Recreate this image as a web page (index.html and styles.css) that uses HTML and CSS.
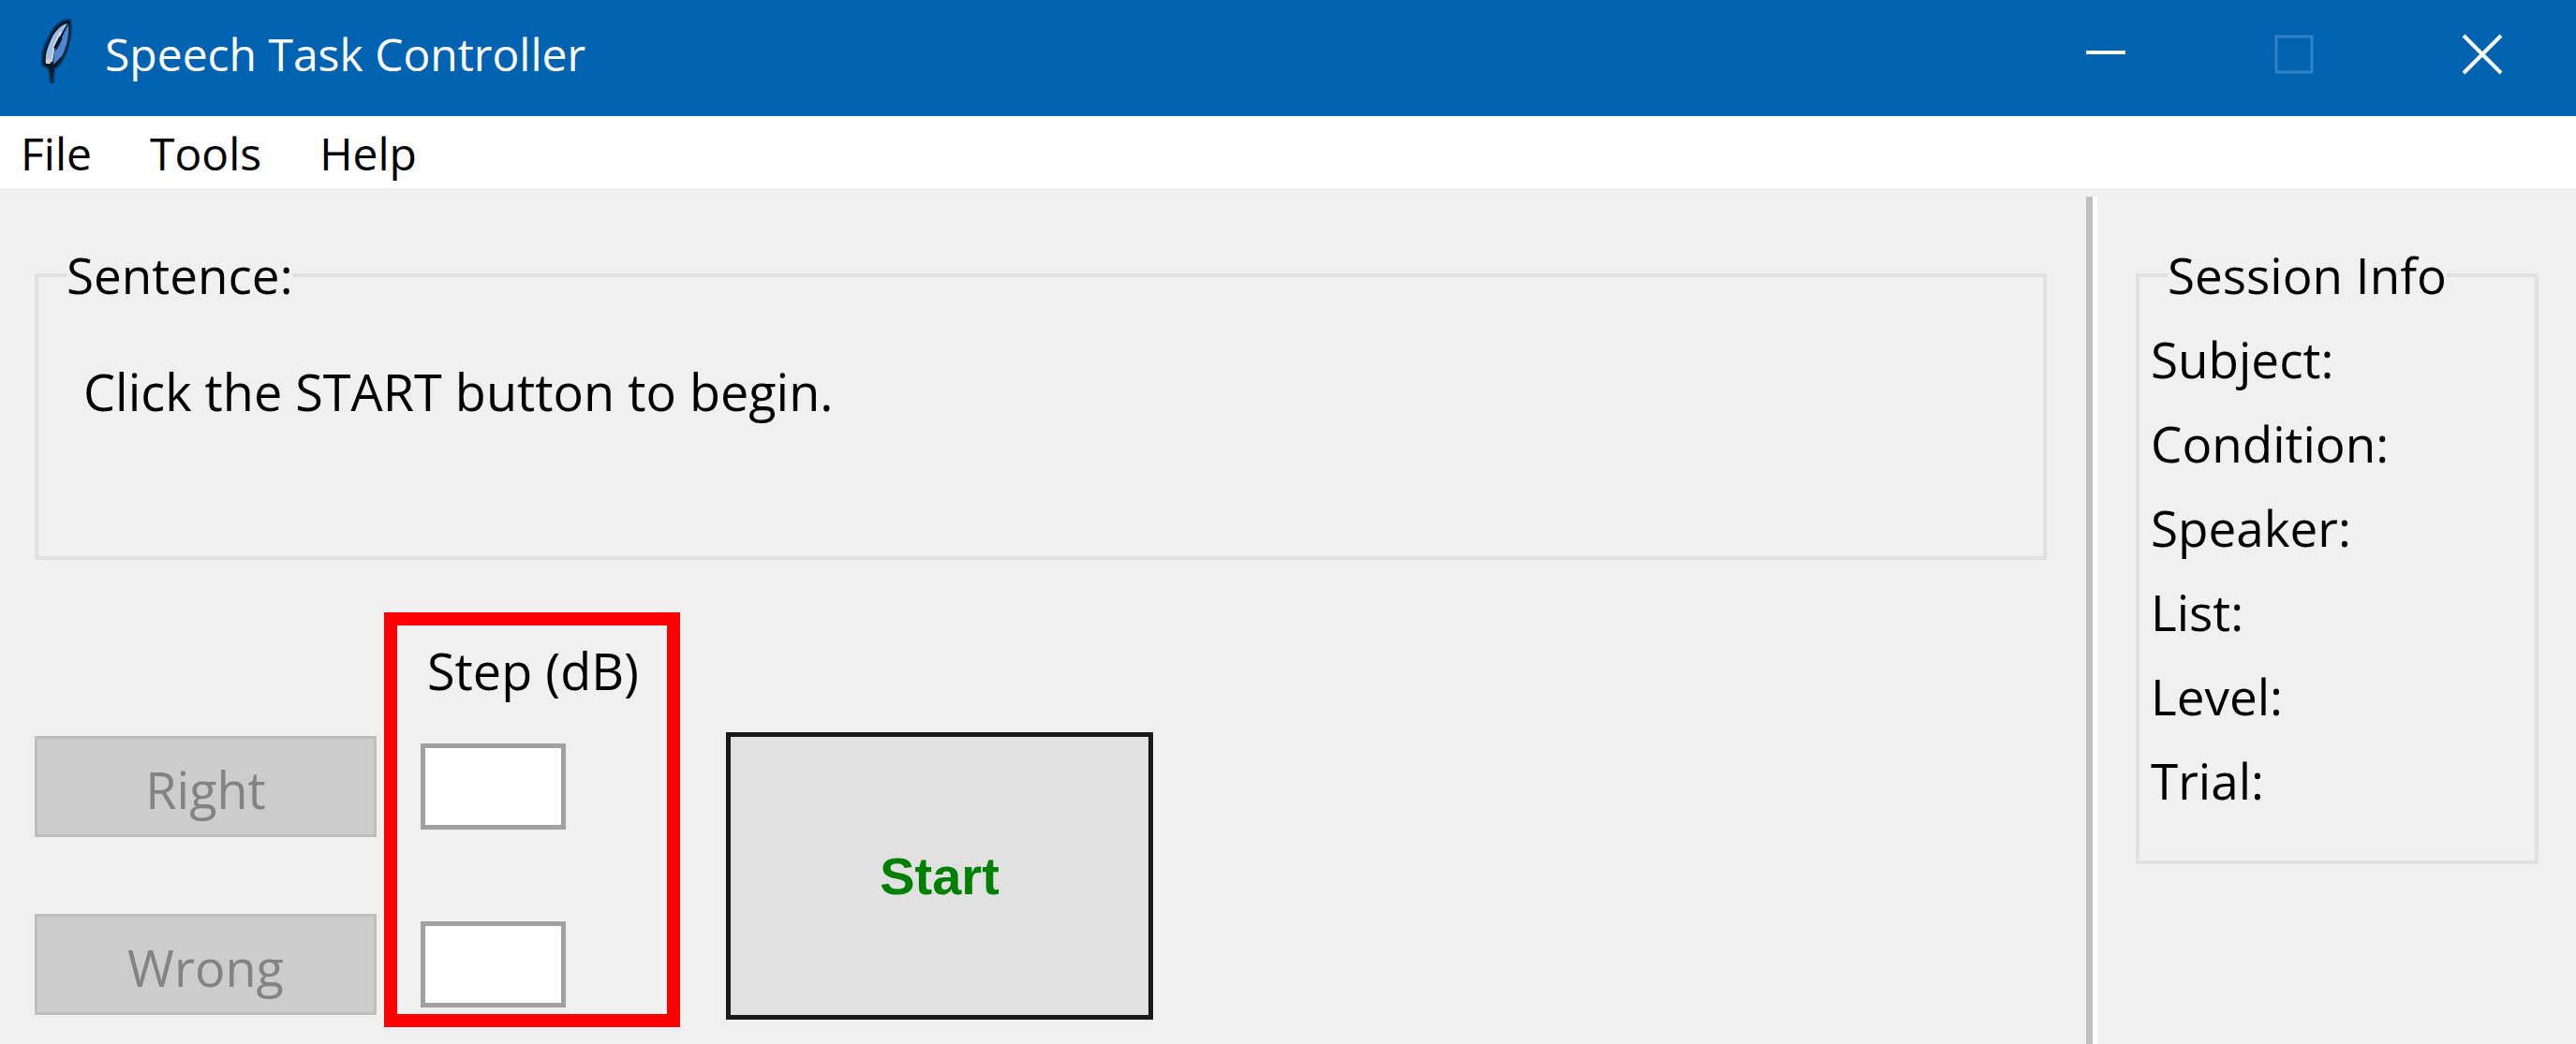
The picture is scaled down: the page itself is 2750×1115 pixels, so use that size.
FILE: index.html
```html
<!DOCTYPE html>
<html lang="en">
<head>
<meta charset="utf-8">
<title>Speech Task Controller</title>
<link rel="stylesheet" href="styles.css">
</head>
<body>
<header class="titlebar">
  <svg class="feather" viewBox="0 0 36 72" aria-hidden="true">
    <path d="M33 3C25 2 16 9 11 20C7 27 3 35 3 44L3 51L10 56L12 70L15 70L16 56C22 52 27 44 30 34C33 24 35 12 33 3Z" fill="#0b1a2b" stroke="#0a3a66" stroke-width="2"/>
    <path d="M30 7C22 9 15 17 11 28C8 35 6 42 7 50L12 50L14 36L20 24Z" fill="#9fbfe6"/>
    <path d="M31 8C32 20 29 33 24 42L15 51L16 38L24 22Z" fill="#4f86d2"/>
    <path d="M23 16L16 30L13 48" fill="none" stroke="#d5e2f0" stroke-width="2"/>
    <path d="M23 22L17 34" fill="none" stroke="#0b1a2b" stroke-width="4"/>
    <path d="M7 46L12 44L11 50L7 50Z" fill="#d8d3cc"/>
  </svg>
  <h1 class="title">Speech Task Controller</h1>
  <div class="window-buttons">
    <button class="window-button" type="button" aria-label="Minimize">
      <svg class="glyph" viewBox="0 0 44 44" aria-hidden="true"><path d="M1 20H43" stroke="#fff" stroke-width="4"/></svg>
    </button>
    <button class="window-button" type="button" aria-label="Maximize" disabled>
      <svg class="glyph" viewBox="0 0 44 44" aria-hidden="true"><rect x="3" y="3" width="38" height="38" fill="none" stroke="#3382c1" stroke-width="3"/></svg>
    </button>
    <button class="window-button" type="button" aria-label="Close">
      <svg class="glyph" viewBox="0 0 44 44" aria-hidden="true"><path d="M2 2L42 42M42 2L2 42" stroke="#fff" stroke-width="4"/></svg>
    </button>
  </div>
</header>
<nav class="menubar">
  <button class="menu" type="button">File</button>
  <button class="menu" type="button">Tools</button>
  <button class="menu" type="button">Help</button>
</nav>
<main class="workspace">
  <section class="task">
    <fieldset class="group">
      <legend class="group-title">Sentence:</legend>
      <p class="message">Click the START button to begin.</p>
    </fieldset>
    <div class="controls">
      <div class="responses">
        <button class="response" type="button" disabled>Right</button>
        <button class="response" type="button" disabled>Wrong</button>
      </div>
      <div class="steps">
        <label class="steps-label" for="step-right">Step (dB)</label>
        <input class="step" id="step-right" type="text">
        <input class="step" id="step-wrong" type="text" aria-label="Step (dB) when wrong">
      </div>
      <button class="start" type="button">Start</button>
    </div>
  </section>
  <aside class="session">
    <fieldset class="group">
      <legend class="group-title">Session Info</legend>
      <ul class="details">
        <li>Subject:</li>
        <li>Condition:</li>
        <li>Speaker:</li>
        <li>List:</li>
        <li>Level:</li>
        <li>Trial:</li>
      </ul>
    </fieldset>
  </aside>
</main>
</body>
</html>
```
FILE: styles.css
```css
* {
  box-sizing: border-box;
}

body {
  display: flex;
  flex-direction: column;
  min-height: 100vh;
  margin: 0;
  background: #f0f0f0;
  color: #000;
  font-family: "Open Sans", "Noto Sans", sans-serif;
  font-size: 54px;
  line-height: 70px;
}

button,
input {
  margin: 0;
  font: inherit;
}

/* Title bar */
.titlebar {
  display: flex;
  align-items: center;
  padding: 0 0 8px 42px;
  background: #0063b1;
  color: #fff;
}

.feather {
  width: 36px;
  height: 72px;
  margin-bottom: 8px;
}

.title {
  flex: 1;
  margin: 0 0 0 34px;
  font-size: 48px;
  font-weight: 400;
  line-height: 112px;
}

.window-buttons {
  display: flex;
}

.window-button {
  display: flex;
  align-items: center;
  justify-content: center;
  width: 201px;
  height: 116px;
  padding: 0;
  border: 0;
  background: none;
}

.glyph {
  width: 44px;
  height: 44px;
}

/* Menu bar */
.menubar {
  display: flex;
  gap: 62px;
  padding: 5px 22px 2px;
  background: #fff;
  font-size: 48px;
}

.menu {
  padding: 0;
  border: 0;
  background: none;
  color: #000;
}

/* Work area */
.workspace {
  display: flex;
  flex: 1;
}

.task {
  flex: 1;
  padding: 58px 42px 18px 37px;
}

.session {
  width: 523px;
  margin-top: 9px;
  padding: 49px 40px 18px 46px;
  border-left: 7px solid #c0c0c0;
  box-shadow: inset 5px 0 #fff;
}

.group {
  min-width: 0;
  margin: 0;
  padding: 0;
  border: 4px solid #e0e0e0;
}

.group-title {
  margin-left: 30px;
  padding: 0;
  font-size: 53px;
}

.message {
  margin: 0;
  padding: 54px 48px 141px;
}

.details {
  margin: 0;
  padding: 10px 12px 40px;
  font-size: 53px;
  line-height: 90px;
  list-style: none;
}

/* Controls */
.controls {
  display: flex;
  align-items: flex-end;
  margin-top: 56px;
}

.responses {
  display: flex;
  flex-direction: column;
  gap: 82px;
  width: 365px;
  margin: 0 8px 13px 0;
}

.response {
  height: 108px;
  padding: 6px 0 0;
  border: 3px solid #bfbfbf;
  background: #ccc;
  color: #838383;
}

.steps {
  display: flex;
  flex-direction: column;
  align-items: flex-start;
  width: 316px;
  padding: 13px 25px 7px;
  border: 14px solid #f00;
}

.steps-label {
  margin: 0 0 43px 7px;
}

.step {
  width: 155px;
  height: 92px;
  padding: 0 12px;
  border: 5px solid #a0a0a0;
  background: #fff;
}

.step + .step {
  margin-top: 98px;
}

.start {
  width: 456px;
  height: 307px;
  margin: 0 0 8px 49px;
  border: 5px solid #1a1a1a;
  background: #e1e1e1;
  color: #008000;
  font-family: "Liberation Sans", Arial, sans-serif;
  font-size: 56px;
  font-weight: 700;
}
```
